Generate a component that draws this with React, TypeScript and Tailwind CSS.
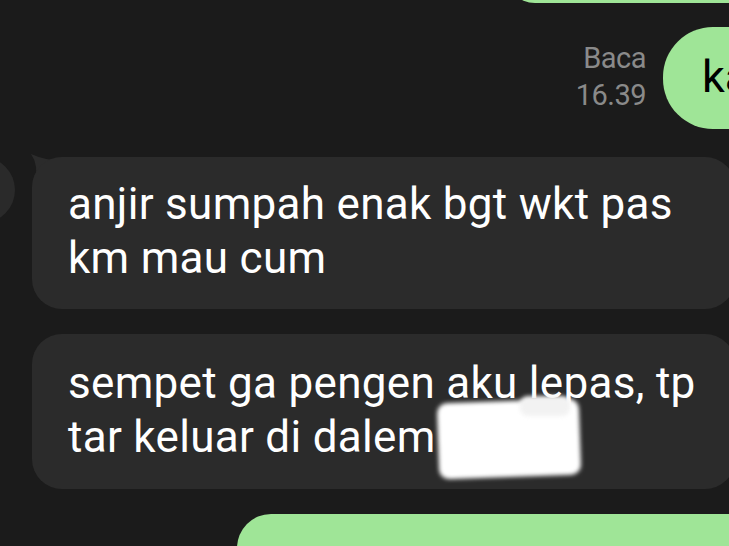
const green = "bg-[#9fe597]";

const App = () => {
  return (
    <div
      className="w-[729px] h-[546px] overflow-hidden bg-[#1b1b1b] flex flex-col"
      style={{ fontFamily: "Roboto, 'Noto Sans', sans-serif" }}
    >
      {/* previous outgoing bubble, cut off at the top */}
      <div className={`ml-[505px] mr-[-40px] h-[60px] mt-[-57px] rounded-[34px] ${green} shrink-0`} />

      {/* outgoing bubble with read receipt */}
      <div className="mt-[24px] flex justify-end items-center shrink-0">
        <div className="text-right text-[#8a8a8a] text-[29px] leading-[37px] mr-[17px] mt-[-2px] tracking-[-0.5px]">
          <div>Baca</div>
          <div>16.39</div>
        </div>
        <div className={`w-[120px] mr-[-54px] h-[102px] rounded-[50px] ${green} flex items-center pl-[39px]`}>
          <span className="text-[45px] text-black leading-none mt-[-4px]">ka</span>
        </div>
      </div>

      {/* incoming 1 */}
      <div className="relative mt-[25px] ml-[32px] mr-[-6px] shrink-0">
        <div className="absolute left-[-83px] top-[3px] w-[66px] h-[66px] rounded-full bg-[#2a2a2a]" />
        <svg className="absolute left-[-2px] top-[-1px]" width="40" height="40" viewBox="0 0 40 40">
          <path d="M1 1 Q 9 12 5 30 L 36 30 L 36 8 Q 16 8 1 1 Z" fill="#2b2b2b" />
        </svg>
        <div className="relative bg-[#2b2b2b] rounded-[30px] mt-[3px] h-[152px] pl-[36px] pt-[20px] text-white text-[44px] leading-[54px] tracking-[0.3px]">
          anjir sumpah enak bgt wkt pas
          <br />
          km mau cum
        </div>
      </div>

      {/* incoming 2 */}
      <div className="relative mt-[25px] ml-[32px] mr-[-6px] shrink-0">
        <div className="relative bg-[#2b2b2b] rounded-[30px] h-[155px] pl-[36px] pt-[22px] text-white text-[44px] leading-[54px] tracking-[0.3px]">
          sempet ga pengen aku lepas, tp
          <br />
          tar keluar di dalem
          <div className="absolute left-[406px] top-[67px] w-[142px] h-[76px] bg-white rounded-[10px] blur-[2px] -rotate-2" />
          <div className="absolute left-[488px] top-[62px] w-[50px] h-[20px] bg-[#f2f2f2] rounded-[8px] blur-[2px]" />
        </div>
      </div>

      {/* next outgoing bubble, cut off at the bottom */}
      <div className={`mt-[25px] ml-[237px] mr-[-40px] h-[80px] rounded-[34px] ${green} shrink-0`} />
    </div>
  );
};

export default App;
